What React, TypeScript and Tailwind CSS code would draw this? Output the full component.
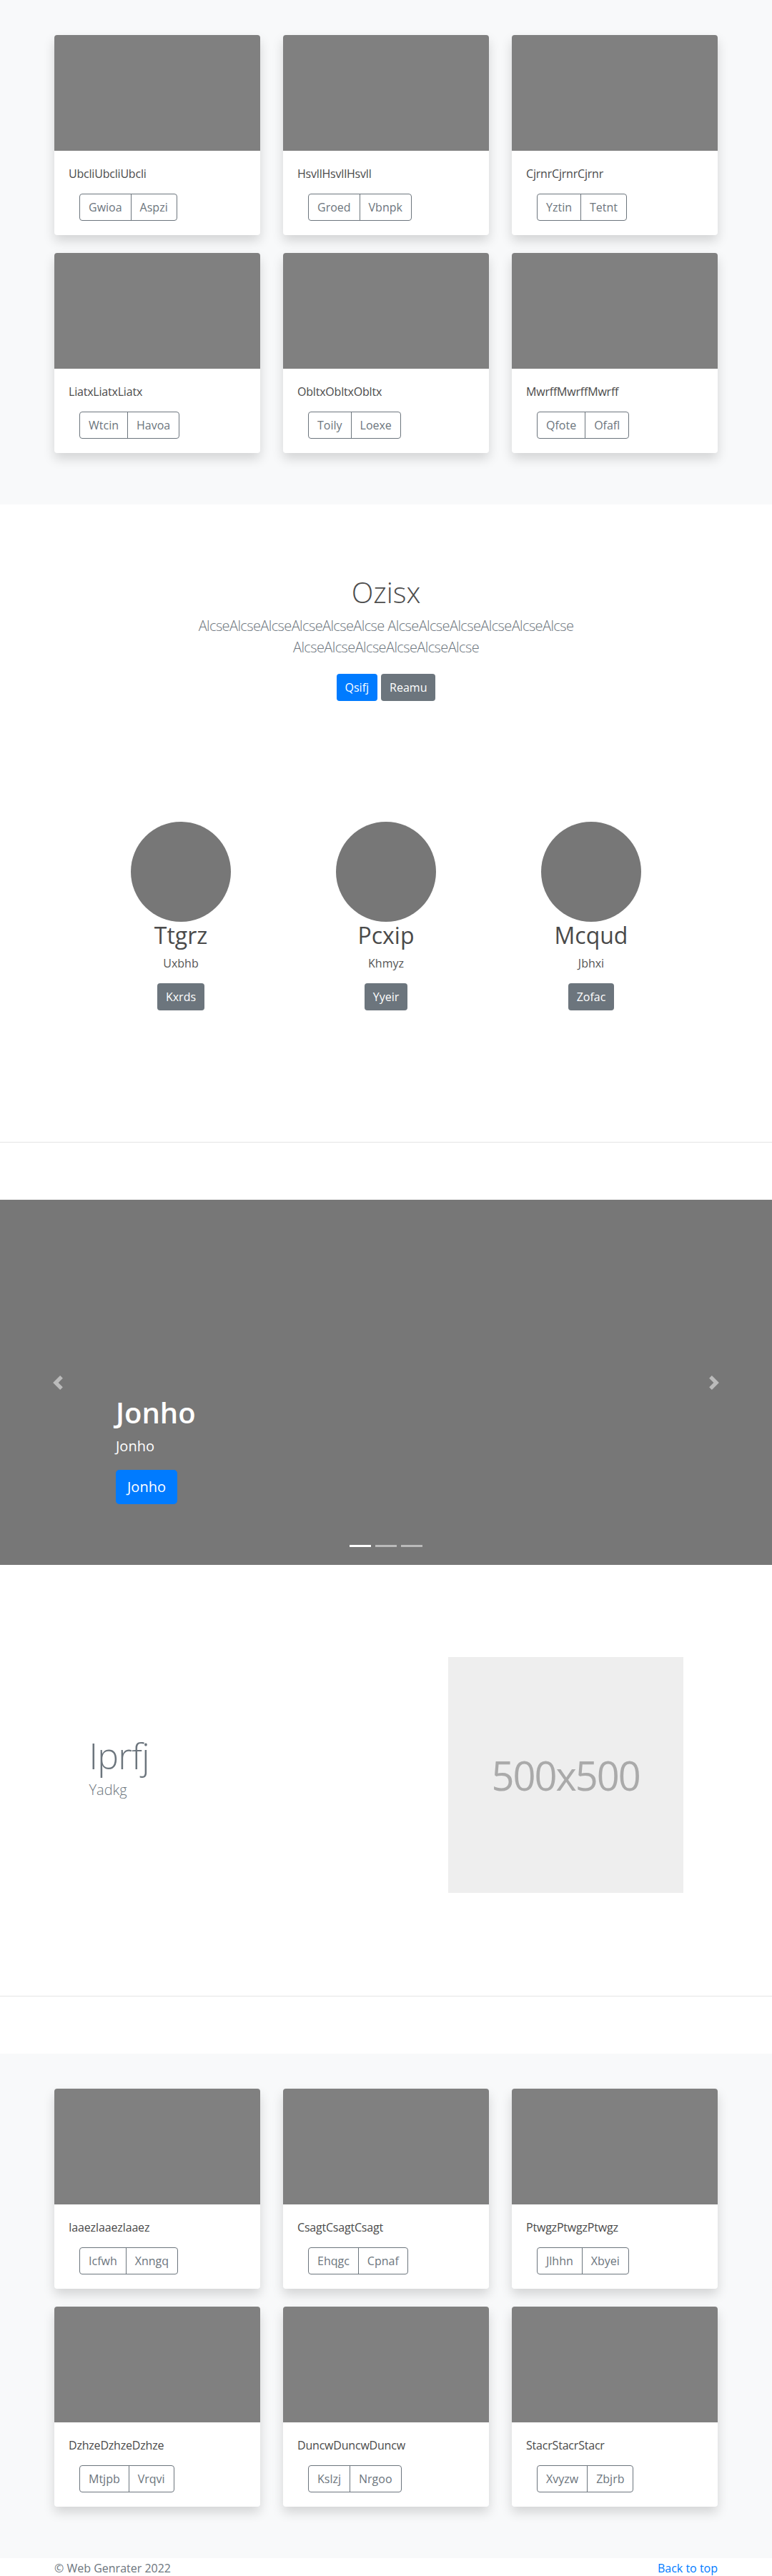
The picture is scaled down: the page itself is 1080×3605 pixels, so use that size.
import React from "react";

type CardData = { title: string; a: string; b: string };

const albumTop: CardData[] = [
  { title: "UbcliUbcliUbcli", a: "Gwioa", b: "Aspzi" },
  { title: "HsvllHsvllHsvll", a: "Groed", b: "Vbnpk" },
  { title: "CjrnrCjrnrCjrnr", a: "Yztin", b: "Tetnt" },
  { title: "LiatxLiatxLiatx", a: "Wtcin", b: "Havoa" },
  { title: "ObltxObltxObltx", a: "Toily", b: "Loexe" },
  { title: "MwrffMwrffMwrff", a: "Qfote", b: "Ofafl" },
];

const albumBottom: CardData[] = [
  { title: "IaaezIaaezIaaez", a: "Icfwh", b: "Xnngq" },
  { title: "CsagtCsagtCsagt", a: "Ehqgc", b: "Cpnaf" },
  { title: "PtwgzPtwgzPtwgz", a: "Jlhhn", b: "Xbyei" },
  { title: "DzhzeDzhzeDzhze", a: "Mtjpb", b: "Vrqvi" },
  { title: "DuncwDuncwDuncw", a: "Kslzj", b: "Nrgoo" },
  { title: "StacrStacrStacr", a: "Xvyzw", b: "Zbjrb" },
];

const people = [
  { name: "Ttgrz", sub: "Uxbhb", btn: "Kxrds" },
  { name: "Pcxip", sub: "Khmyz", btn: "Yyeir" },
  { name: "Mcqud", sub: "Jbhxi", btn: "Zofac" },
];

function Card({ title, a, b }: CardData) {
  return (
    <div className="flex h-[280px] flex-col overflow-hidden rounded bg-white shadow-[0_8px_16px_rgba(0,0,0,0.15)]">
      <div className="h-[162px] bg-[#808080]" />
      <div className="p-5">
        <p className="mb-4 text-base leading-6 tracking-[-0.2px] text-[#4a4a4a]">{title}</p>
        <div className="flex pl-[15px]">
          <div className="flex h-[38px] rounded border border-[#6c757d] text-base leading-6 text-[#6c757d]">
            <span className="flex items-center px-3">{a}</span>
            <span className="flex items-center border-l border-[#6c757d] px-3">{b}</span>
          </div>
        </div>
      </div>
    </div>
  );
}

function Album({ items }: { items: CardData[] }) {
  return (
    <section className="bg-[#f8f9fa] pb-[72px] pt-[49px]">
      <div className="mx-auto grid w-[928px] grid-cols-3 gap-x-8 gap-y-[25px]">
        {items.map((c) => (
          <Card key={c.title} {...c} />
        ))}
      </div>
    </section>
  );
}

export default function App() {
  return (
    <div className="min-h-screen w-full bg-white font-['Open_Sans','Noto_Sans',sans-serif] text-[#212529]">
      <Album items={albumTop} />

      {/* Jumbotron */}
      <section className="pt-[99px] text-center">
        <h1 className="mb-2 text-[40px] font-light leading-[48px] text-[#4d4d4d]">Ozisx</h1>
        <p className="mx-auto mb-[22px] max-w-[600px] text-[20px] font-light leading-[30px] tracking-[-0.6px] text-[#6c757d]">
          AlcseAlcseAlcseAlcseAlcseAlcse AlcseAlcseAlcseAlcseAlcseAlcse AlcseAlcseAlcseAlcseAlcseAlcse
        </p>
        <div className="flex justify-center gap-[5px]">
          <a className="flex h-[38px] items-center rounded bg-[#007bff] px-3 text-base text-white">Qsifj</a>
          <a className="flex h-[38px] items-center rounded bg-[#6c757d] px-3 text-base text-white">Reamu</a>
        </div>
      </section>

      {/* Circles */}
      <section className="mx-auto mt-[169px] grid w-[861px] grid-cols-3">
        {people.map((p) => (
          <div key={p.name} className="flex flex-col items-center text-center">
            <div className="h-[140px] w-[140px] rounded-full bg-[#777777]" />
            <h2 className="mb-2 text-[32px] leading-[38px] text-[#4a4a4a]">{p.name}</h2>
            <p className="mb-4 text-base leading-6 text-[#555555]">{p.sub}</p>
            <a className="flex h-[38px] items-center rounded bg-[#6c757d] px-3 text-base text-white">{p.btn}</a>
          </div>
        ))}
      </section>

      <hr className="mt-[184px] border-0 border-t border-[#e5e5e5]" />

      {/* Carousel */}
      <div className="relative mt-20 h-[511px] bg-[#777777]">
        <svg
          className="absolute left-[71px] top-1/2 h-5 w-5 -translate-y-1/2 opacity-50"
          viewBox="0 0 8 8"
          fill="#ffffff"
        >
          <path d="M5.25 0l-4 4 4 4 1.5-1.5L4.25 4l2.5-2.5L5.25 0z" />
        </svg>
        <svg
          className="absolute right-[71px] top-1/2 h-5 w-5 -translate-y-1/2 opacity-50"
          viewBox="0 0 8 8"
          fill="#ffffff"
        >
          <path d="M2.75 0l-1.5 1.5L3.75 4l-2.5 2.5L2.75 8l4-4-4-4z" />
        </svg>
        <div className="absolute left-[162px] top-[274px] text-white">
          <h1 className="mb-2 text-[40px] font-semibold leading-[48px]">Jonho</h1>
          <p className="text-[20px] leading-[30px]">Jonho</p>
          <div className="mt-[18px] flex">
            <a className="flex h-[48px] items-center rounded-[5px] bg-[#007bff] px-4 text-[20px] text-white">Jonho</a>
          </div>
        </div>
        <div className="absolute bottom-[25px] left-1/2 flex -translate-x-1/2 gap-[6px]">
          <span className="h-[3px] w-[30px] bg-white" />
          <span className="h-[3px] w-[30px] bg-white/50" />
          <span className="h-[3px] w-[30px] bg-white/50" />
        </div>
      </div>

      {/* Featurette */}
      <section className="mx-auto mt-[129px] flex w-[861px] items-center">
        <div className="w-7/12 px-[15px]">
          <h2 className="text-[50px] font-light leading-none tracking-[-0.8px] text-[#6c757d]">Iprfj</h2>
          <p className="mb-4 mt-2 text-[20px] font-light leading-[30px] text-[#6c757d]">Yadkg</p>
        </div>
        <div className="w-5/12 px-[15px]">
          <div className="flex h-[330px] items-center justify-center bg-[#eeeeee] text-[56px] tracking-[-2px] text-[#aaaaaa]">
            500x500
          </div>
        </div>
      </section>

      <hr className="mt-[144px] border-0 border-t border-[#e5e5e5]" />

      <div className="mt-20">
        <Album items={albumBottom} />
      </div>

      <footer className="pb-12 pt-[2px]">
        <div className="mx-auto flex w-[928px] justify-between text-base leading-6">
          <p className="text-[#6c757d]">© Web Genrater 2022</p>
          <a className="text-[#007bff]">Back to top</a>
        </div>
      </footer>
    </div>
  );
}
